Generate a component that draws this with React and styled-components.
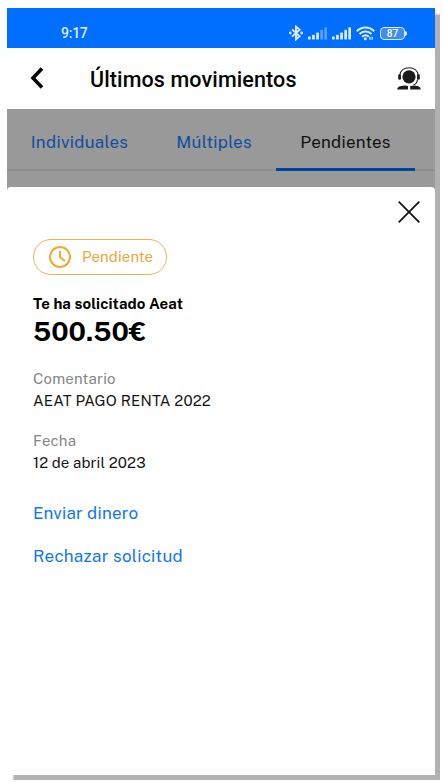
import styled, { createGlobalStyle } from 'styled-components';

const tabs = [
  { label: 'Individuales', width: 145, spacing: 0.28 },
  { label: 'Múltiples', width: 124, spacing: 0.22 },
  { label: 'Pendientes', width: 139, spacing: 0.22, active: true },
];

const App = () => {
  return (
    <>
      <GlobalStyle />
      <Page>
        <Phone>
          <StatusBar>
            <Time>9:17</Time>
            <StatusIcons />
          </StatusBar>
          <Header>
            <BackButton aria-label="Volver">
              <svg width="14" height="22" viewBox="0 0 14 22">
                <path d="M12 1.5 3 11l9 9.5" fill="none" stroke="#050505" strokeWidth="3.6" />
              </svg>
            </BackButton>
            <Title>Últimos movimientos</Title>
            <SupportButton aria-label="Ayuda">
              <SupportIcon />
            </SupportButton>
          </Header>
          <Tabs>
            {tabs.map((tab) => (
              <Tab key={tab.label} $width={tab.width} $spacing={tab.spacing} $active={tab.active}>
                {tab.label}
              </Tab>
            ))}
          </Tabs>
          <Backdrop>
            <Sheet>
              <CloseRow>
                <CloseButton aria-label="Cerrar">
                  <svg width="22" height="22" viewBox="0 0 22 22">
                    <path d="M.7.7l20.6 20.6M21.3.7.7 21.3" stroke="#111" strokeWidth="1.7" />
                  </svg>
                </CloseButton>
              </CloseRow>
              <Badge>
                <svg width="22" height="22" viewBox="0 0 22 22" fill="none" stroke="#eba936">
                  <circle cx="11" cy="11" r="10" strokeWidth="2" />
                  <path d="M11 5v6.2l5 3.8" strokeWidth="2" />
                </svg>
                <BadgeText>Pendiente</BadgeText>
              </Badge>
              <Requester>Te ha solicitado Aeat</Requester>
              <Amount>500.50€</Amount>
              <Field>
                <Label $spacing={0.2}>Comentario</Label>
                <Value $spacing={0.15}>AEAT PAGO RENTA 2022</Value>
              </Field>
              <Field>
                <Label $spacing={0.2}>Fecha</Label>
                <Value $spacing={0.1}>12 de abril 2023</Value>
              </Field>
              <Actions>
                <Action $spacing={0.2}>Enviar dinero</Action>
                <Action $spacing={0.28}>Rechazar solicitud</Action>
              </Actions>
            </Sheet>
          </Backdrop>
        </Phone>
      </Page>
    </>
  );
};

const StatusIcons = () => (
  <Icons>
    <svg width="14" height="16" viewBox="0 0 14 16" fill="none" stroke="#dcebff" strokeWidth="1.9">
      <path d="M3 4.4 10.6 11.2 7 14.4V1.6l3.6 3.2L3 11.6" />
      <circle cx="1.2" cy="8" r=".5" fill="#dcebff" />
      <circle cx="12.7" cy="8" r=".5" fill="#dcebff" />
    </svg>
    <Signal $dim />
    <Signal />
    <svg width="19" height="15" viewBox="0 0 19 15" fill="none" stroke="#dcebff" strokeWidth="2.1">
      <path d="M.8 5.2C5.7.2 13.3.2 18.2 5.2" />
      <path d="M3.5 8c3.4-3.4 8.6-3.4 12 0" />
      <path d="M6.2 10.7c1.9-1.9 4.7-1.9 6.6 0" />
      <circle cx="9.3" cy="12.8" r="1.5" fill="#dcebff" stroke="none" />
      <path d="M14 10.7v3M16.2 10.7v3" strokeWidth="1.3" />
    </svg>
    <Battery>
      <BatteryLevel>87</BatteryLevel>
    </Battery>
  </Icons>
);

const Signal = ({ $dim }) => (
  <svg width="19" height="13" viewBox="0 0 19 13" fill="#dcebff">
    <rect x="0" y="9.5" width="2.7" height="3" rx=".6" />
    <rect x="4.1" y="7.7" width="2.7" height="4.8" rx=".6" />
    <rect x="8.2" y="5.5" width="2.7" height="7" rx=".6" />
    <rect x="12.3" y="2.8" width="2.7" height="9.7" rx=".6" opacity={$dim ? 0.4 : 1} />
    <rect x="16.3" y=".3" width="2.7" height="12.2" rx=".6" opacity={$dim ? 0.4 : 1} />
  </svg>
);

const SupportIcon = () => (
  <svg width="24" height="23" viewBox="0 0 24 23" fill="#1c1c1c">
    <circle cx="12" cy="9.8" r="6.6" />
    <path d="M2.8 8C3.4 3.7 7.1.8 12 .8S20.6 3.7 21.2 8" fill="none" stroke="#1c1c1c" strokeWidth="1.1" />
    <rect x="1.2" y="7.2" width="2.8" height="5.6" rx="1.3" />
    <rect x="20" y="7.2" width="2.8" height="5.6" rx="1.3" />
    <path d="M20.5 12.5c-.2 2.6-1.6 4.7-4 5.5" fill="none" stroke="#1c1c1c" strokeWidth="1.1" />
    <path d="M.2 22.6c.2-2.8 2-3.6 7.6-4.2l3.2.6v3.6zM23.8 22.6c-.2-2.8-2-3.6-6.6-4.1l-4 .5v3.6z" />
  </svg>
);

const GlobalStyle = createGlobalStyle`
  body {
    margin: 0;
    background: #fefefe;
    font-family: 'Public Sans', Inter, sans-serif;
  }
  * {
    box-sizing: border-box;
  }
  svg {
    display: block;
    flex: none;
  }
  button {
    padding: 0;
    border: 0;
    background: none;
    font: inherit;
  }
`;

const Page = styled.div`
  height: 783px;
  padding: 8px 0 0 7px;
`;

const Phone = styled.main`
  display: flex;
  flex-direction: column;
  width: 428px;
  height: 767px;
  background: #fff;
  box-shadow: 4.5px 4.5px 1px #b1b1b1;
`;

const StatusBar = styled.div`
  display: flex;
  align-items: center;
  justify-content: space-between;
  height: 40px;
  padding: 10px 28px 0 54px;
  background: #006eff;
`;

const Time = styled.span`
  color: #dcebff;
  font: 500 14px/16px Roboto, sans-serif;
  letter-spacing: -0.25px;
`;

const Icons = styled.div`
  display: flex;
  align-items: center;
  gap: 5px;
`;

const Battery = styled.div`
  display: flex;
  align-items: center;
  width: 27px;
  &::after {
    content: '';
    width: 2px;
    height: 5px;
    border-radius: 0 2px 2px 0;
    background: #dcebff;
  }
`;

const BatteryLevel = styled.span`
  width: 25px;
  height: 13px;
  border: 1.5px solid #dcebff;
  border-radius: 4px;
  background: #3f8bf2;
  color: #fff;
  font: 500 10px/11px Roboto, sans-serif;
  text-align: center;
`;

const Header = styled.header`
  display: flex;
  align-items: center;
  height: 61px;
  padding: 0 14px 0 23px;
  background: #fff;
`;

const BackButton = styled.button`
  width: 60px;
  margin-top: -2px;
`;

const Title = styled.h1`
  flex: 1;
  margin: 3px 0 0;
  color: #050505;
  font: 500 21.5px/26px Roboto, sans-serif;
  letter-spacing: 0.12px;
  white-space: nowrap;
`;

const SupportButton = styled.button`
  flex: none;
`;

const Tabs = styled.nav`
  display: flex;
  height: 62px;
  border-bottom: 2px solid #8e8e8e;
  background: #999;
`;

const Tab = styled.a`
  width: ${({ $width }) => $width}px;
  height: 62px;
  padding-top: 19.5px;
  border-bottom: ${({ $active }) => ($active ? '3.5px solid #00449f' : '0')};
  color: ${({ $active }) => ($active ? '#111' : '#124c9f')};
  font-size: 17px;
  line-height: 26px;
  letter-spacing: ${({ $spacing }) => $spacing}px;
  text-align: center;
`;

const Backdrop = styled.div`
  flex: 1;
  padding-top: 15.5px;
  background: linear-gradient(#999 30px, #fff 30px);
`;

const Sheet = styled.section`
  display: flex;
  flex-direction: column;
  align-items: flex-start;
  height: 100%;
  padding: 14.5px 15px 0 26px;
  border-radius: 4px 4px 0 0;
  background: #fff;
`;

const CloseRow = styled.div`
  display: flex;
  justify-content: flex-end;
  width: 100%;
  height: 38px;
`;

const CloseButton = styled.button`
  height: 22px;
`;

const Badge = styled.div`
  display: flex;
  align-items: center;
  gap: 11px;
  width: 134px;
  height: 36px;
  padding-left: 15px;
  border: 1px solid #e8b256;
  border-radius: 18px;
  color: #eba936;
`;

const BadgeText = styled.span`
  margin-top: -2px;
  font-size: 15px;
  letter-spacing: 0.1px;
`;

const Requester = styled.p`
  margin: 19px 0 0;
  font-size: 15px;
  font-weight: 700;
  line-height: 20px;
  letter-spacing: 0.1px;
`;

const Amount = styled.p`
  margin: -1px 0 19px;
  font-size: 27px;
  font-weight: 700;
  line-height: 36px;
`;

const Field = styled.div`
  height: 62px;
`;

const Label = styled.p`
  margin: 0;
  color: #858585;
  font-size: 15px;
  line-height: 22px;
  letter-spacing: ${({ $spacing }) => $spacing}px;
`;

const Value = styled(Label)`
  color: #151515;
`;

const Actions = styled.div`
  display: flex;
  flex-direction: column;
  margin-top: 9px;
  gap: 19px;
`;

const Action = styled.a`
  color: #1475ee;
  font-size: 17px;
  line-height: 24px;
  letter-spacing: ${({ $spacing }) => $spacing}px;
`;

export default App;
